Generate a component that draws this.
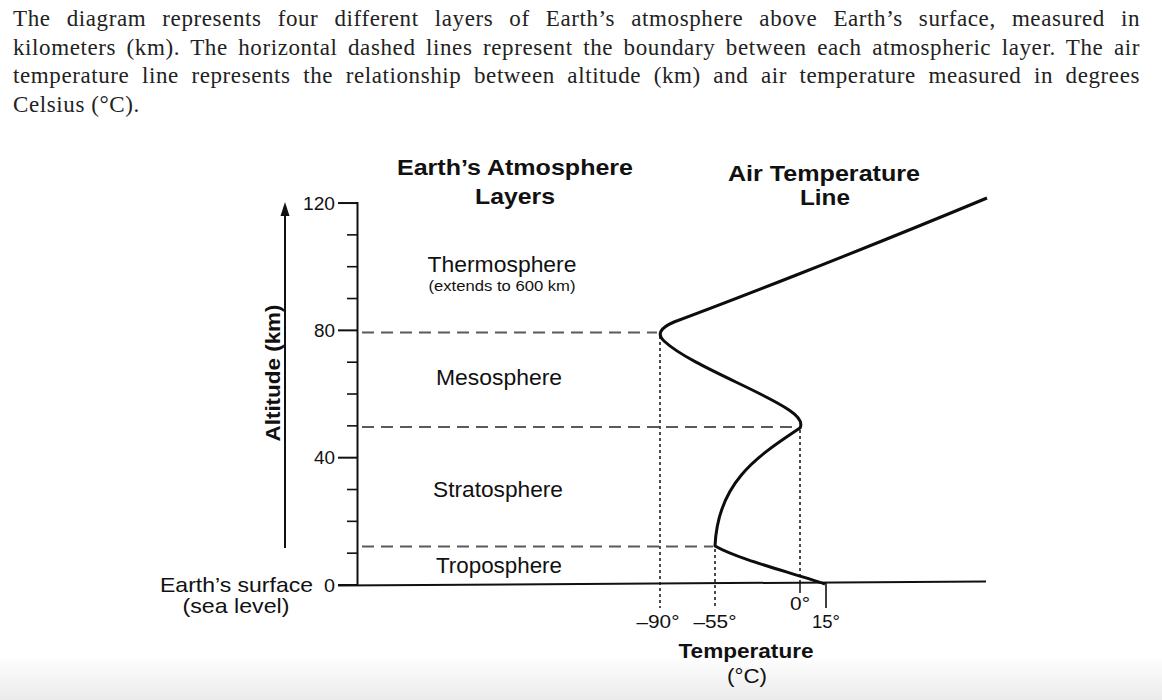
import React from "react";

type TProps = {
  x: number;
  y: number;
  s: number;
  w?: number;
  a?: "start" | "middle" | "end";
  b?: boolean;
  children: React.ReactNode;
};

// svg label, stretched to the width measured on the reference
function T({ x, y, s, w, a = "middle", b = false, children }: TProps) {
  return (
    <text
      x={x}
      y={y}
      fontSize={s}
      fontWeight={b ? 700 : 400}
      textAnchor={a}
      textLength={w}
      lengthAdjust={w ? "spacingAndGlyphs" : undefined}
      fill="#111"
    >
      {children}
    </text>
  );
}

const alt = (km: number) => 585 - km * 3.183;

function Diagram() {
  const minor = [10, 20, 30, 50, 60, 70, 90, 100, 110];
  const major = [
    { km: 0, label: "0", w: 11 },
    { km: 40, label: "40", w: 21 },
    { km: 80, label: "80", w: 21 },
    { km: 120, label: "120", w: 32 },
  ];

  return (
    <svg
      width={1162}
      height={581}
      viewBox="0 119 1162 581"
      className="block font-['Liberation_Sans',Arial,sans-serif]"
    >
      {/* column titles */}
      <T x={515} y={175} s={22} w={236} b>Earth’s Atmosphere</T>
      <T x={515} y={204} s={22} w={80} b>Layers</T>
      <T x={824} y={181} s={22} w={192} b>Air Temperature</T>
      <T x={825} y={205} s={22} w={50} b>Line</T>

      {/* layer names */}
      <T x={502} y={272} s={22} w={149}>Thermosphere</T>
      <T x={502} y={291} s={15.5} w={147}>(extends to 600 km)</T>
      <T x={499} y={385} s={22} w={126}>Mesosphere</T>
      <T x={498} y={497} s={22} w={130}>Stratosphere</T>
      <T x={499} y={573} s={22} w={126}>Troposphere</T>

      {/* altitude arrow */}
      <line x1={285} y1={214} x2={285} y2={548} stroke="#111" strokeWidth={2} />
      <polygon points="285,202 280.5,216 289.5,216" fill="#111" />
      <text
        transform="translate(280,373) rotate(-90)"
        fontSize={20}
        fontWeight={700}
        textAnchor="middle"
        textLength={137}
        lengthAdjust="spacingAndGlyphs"
        fill="#111"
      >
        Altitude (km)
      </text>

      {/* axis */}
      <line x1={357.5} y1={202} x2={357.5} y2={586} stroke="#111" strokeWidth={2} />
      {major.map((m) => (
        <g key={m.km}>
          <line x1={338} y1={alt(m.km)} x2={358} y2={alt(m.km)} stroke="#111" strokeWidth={2} />
          <T x={335} y={alt(m.km) + 6.5} s={18} w={m.w} a="end">{m.label}</T>
        </g>
      ))}
      {minor.map((km) => (
        <line key={km} x1={347} y1={alt(km)} x2={358} y2={alt(km)} stroke="#111" strokeWidth={1.6} />
      ))}
      <T x={313} y={592} s={21} w={153} a="end">Earth’s surface</T>
      <T x={236} y={613} s={21} w={107}>(sea level)</T>

      {/* surface line */}
      <line x1={338} y1={585.5} x2={986} y2={581.5} stroke="#111" strokeWidth={2} />

      {/* layer boundaries */}
      <g stroke="#5a5a5a" strokeWidth={2} strokeDasharray="12 7">
        <line x1={362} y1={332.5} x2={657} y2={332.5} />
        <line x1={362} y1={427} x2={799} y2={427} />
        <line x1={362} y1={546.5} x2={713} y2={546.5} />
      </g>

      {/* temperature drop lines */}
      <g stroke="#111" strokeWidth={1.5} strokeDasharray="3 3">
        <line x1={660} y1={336} x2={660} y2={608} />
        <line x1={715} y1={549} x2={715} y2={608} />
        <line x1={800} y1={430} x2={800} y2={583} />
      </g>
      <line x1={800} y1={583} x2={800} y2={593} stroke="#111" strokeWidth={1.5} />
      <line x1={826} y1={582} x2={826} y2={608} stroke="#111" strokeWidth={1.6} />

      <T x={658} y={628} s={17.5} w={43}>–90°</T>
      <T x={715} y={628} s={17.5} w={43}>–55°</T>
      <T x={800} y={610} s={17.5} w={20}>0°</T>
      <T x={826} y={628} s={17.5} w={28}>15°</T>
      <T x={746} y={658} s={21} w={135} b>Temperature</T>
      <T x={747} y={683} s={21} w={40}>(°C)</T>

      {/* air temperature line */}
      <path
        d="M987,198 C850,255 720,305 674,322 Q653,331 664,341 C690,365 760,390 789,410 Q804,420 800,428 C760,455 718,480 715,546 C740,560 790,572 825,584"
        fill="none"
        stroke="#0d0d0d"
        strokeWidth={3}
        strokeLinejoin="round"
      />
    </svg>
  );
}

export default function App() {
  const justified = "text-justify [text-align-last:justify] whitespace-nowrap";
  return (
    <div className="w-[1162px] h-[700px] overflow-hidden bg-[linear-gradient(to_bottom,#ffffff_655px,#ebebeb_700px)]">
      <div className="pl-[13px] pt-[5px] w-[1140px] font-['Liberation_Serif',Georgia,serif] text-[23px] tracking-[0.6px] leading-[28.5px] text-[#222]">
        <div className={justified}>
          The diagram represents four different layers of Earth’s atmosphere above Earth’s surface, measured in
        </div>
        <div className={justified}>
          kilometers (km). The horizontal dashed lines represent the boundary between each atmospheric layer. The air
        </div>
        <div className={justified}>
          temperature line represents the relationship between altitude (km) and air temperature measured in degrees
        </div>
        <div>Celsius (°C).</div>
      </div>
      <Diagram />
    </div>
  );
}
